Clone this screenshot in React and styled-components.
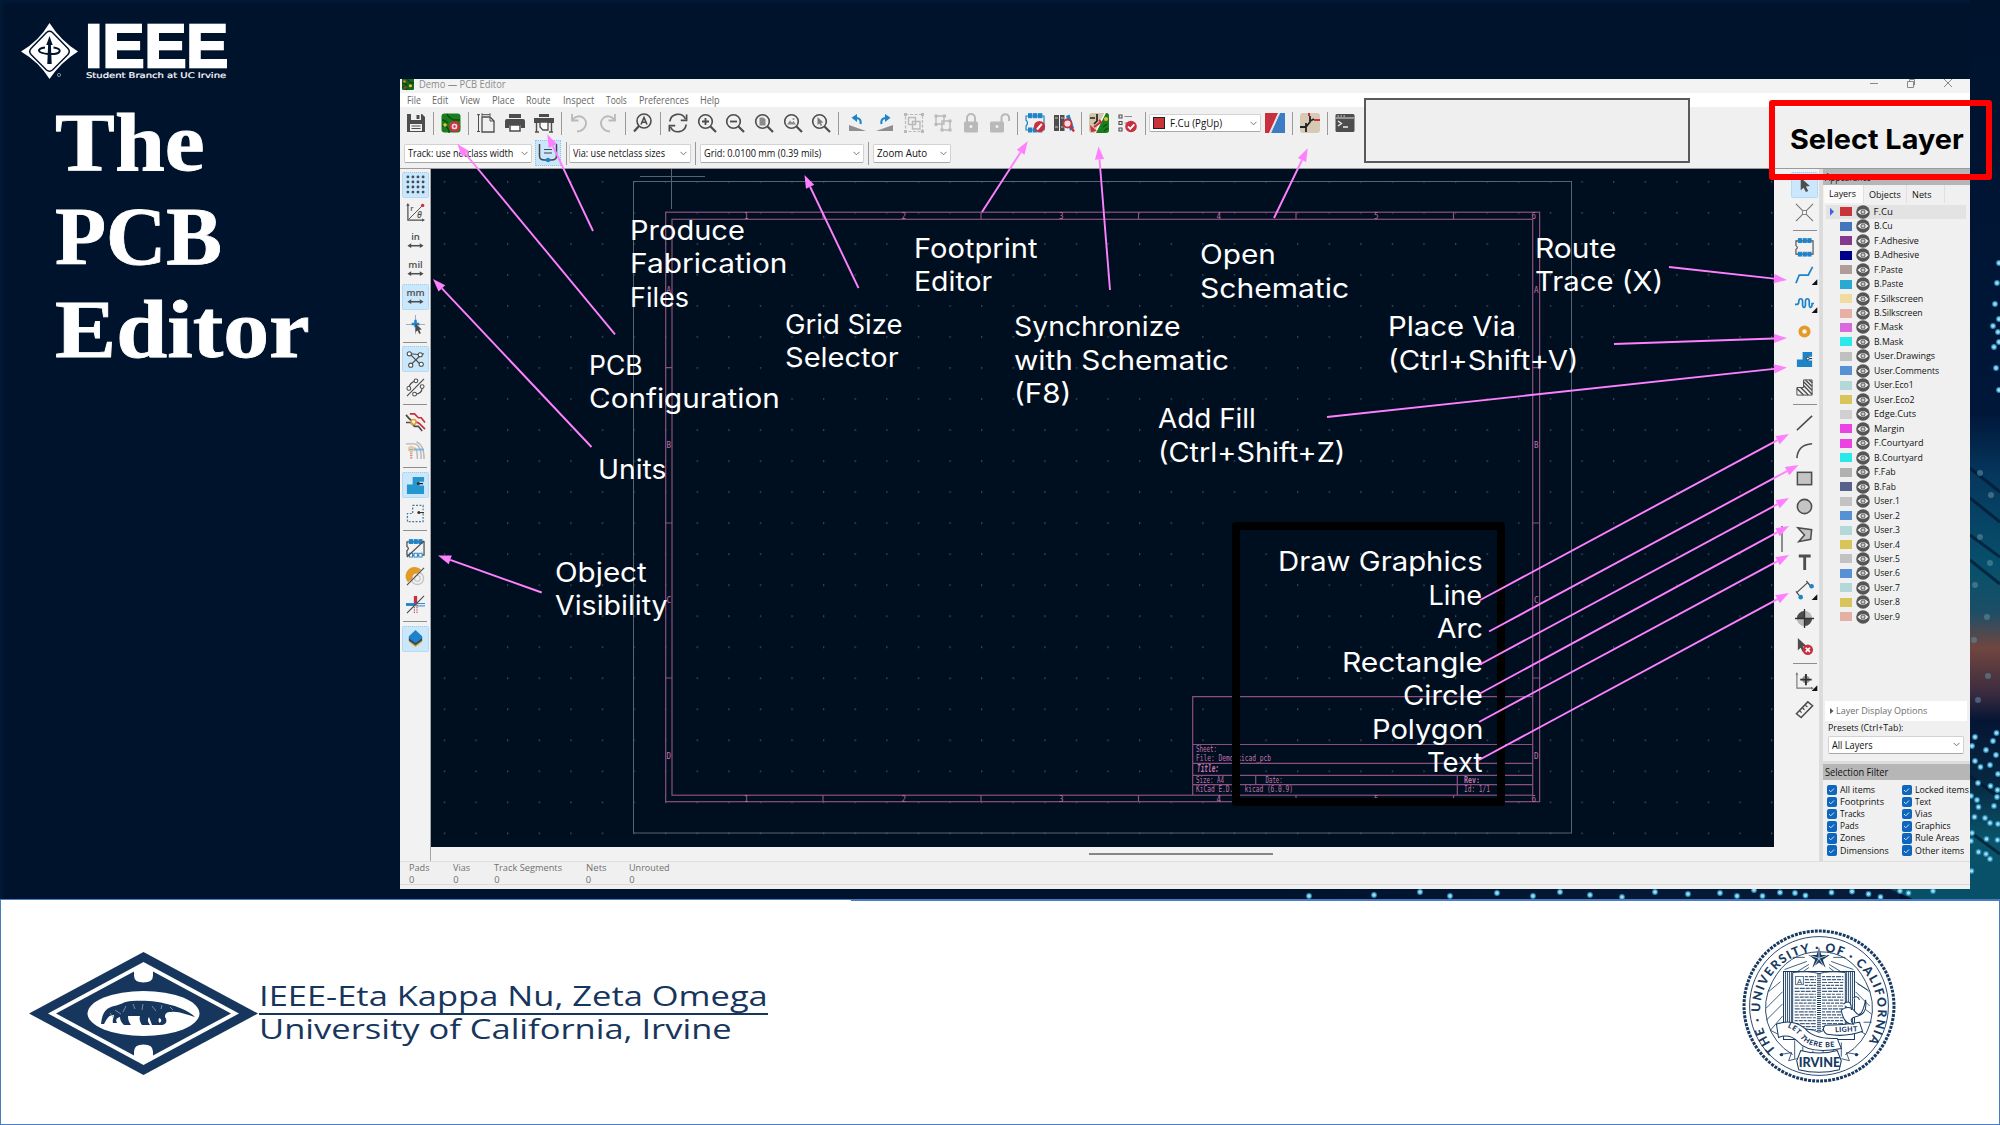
import React, { useLayoutEffect, useRef, useState } from "react";
import styled, { createGlobalStyle } from "styled-components";

const Global = createGlobalStyle`
  * { box-sizing: border-box; }
  html, body { margin: 0; padding: 0; background: #00132d; }
  svg { display: block; }
`;

/* ---------- text that is stretched to a given width ---------- */
const FitBox = styled.span`
  display: block;
  flex: none;
  width: ${(p) => p.$w}px;
  white-space: nowrap;
`;
const FitInner = styled.span`
  display: inline-block;
  white-space: nowrap;
  transform-origin: 0 50%;
`;
function Fit({ w, children }) {
  const ref = useRef(null);
  const [scale, setScale] = useState(1);
  useLayoutEffect(() => {
    const natural = ref.current.offsetWidth;
    if (natural) setScale(w / natural);
  }, [w, children]);
  return (
    <FitBox $w={w}>
      <FitInner ref={ref} style={{ transform: `scaleX(${scale})` }}>{children}</FitInner>
    </FitBox>
  );
}

/* ---------- slide ---------- */
const Slide = styled.main`
  position: relative;
  width: 2000px;
  height: 1125px;
  overflow: hidden;
  display: grid;
  grid-template-rows: 899px 226px;
  background: #00132d;
  font-family: "Open Sans", "Noto Sans", sans-serif;
`;
const Stage = styled.section`
  position: relative;
  display: flex;
  overflow: hidden;
  background: #00132d;
  box-shadow: inset 2px 2px 5px #021d39;
`;
const Backdrop = styled.svg`
  position: absolute;
  right: 0;
  top: 0;
`;
const Side = styled.aside`
  width: 400px;
  flex: none;
  display: flex;
  flex-direction: column;
  color: #fff;
`;
const Brand = styled.div`
  display: flex;
  gap: 7px;
  padding: 23px 0 0 21px;
  height: 92px;
`;
const BrandText = styled.div`
  display: flex;
  flex-direction: column;
`;
const BrandName = styled.div`
  font: 700 62px/46px "Liberation Sans", Arial, sans-serif;
  -webkit-text-stroke: 2.4px #fff;
  height: 48px;
`;
const BrandSub = styled.div`
  padding-left: 1px;
  font: 400 7.8px/10px "DejaVu Sans", sans-serif;
  -webkit-text-stroke: 0.2px #fff;
`;
const Title = styled.h1`
  margin: 4px 0 0 55px;
  font: 700 82px/93.5px "Liberation Serif", Georgia, serif;
  -webkit-text-stroke: 0.8px #fff;
`;

/* ---------- editor window ---------- */
const Window = styled.div`
  position: relative;
  margin-top: 79px;
  width: 1570px;
  height: 810px;
  display: flex;
  flex-direction: column;
  background: #f0f0f0;
  color: #111;
  font-size: 10px;
  overflow: hidden;
`;
const TitleBar = styled.div`
  height: 14px;
  flex: none;
  display: flex;
  align-items: center;
  gap: 5px;
  padding: 0 17px 4px 2px;
  background: #f3f3f3;
  color: #8b8b8b;
  line-height: 10px;
`;
const WindowButtons = styled.div`
  margin-left: auto;
  display: flex;
  gap: 27px;
`;
const MenuBar = styled.nav`
  height: 14px;
  flex: none;
  display: flex;
  align-items: center;
  gap: 11.6px;
  padding-left: 6.5px;
  background: #fff;
  color: #666;
  line-height: 14px;
`;
const ToolRow = styled.div`
  height: 32px;
  flex: none;
  display: flex;
  align-items: center;
  padding-left: 1.6px;
`;
const OptionRow = styled.div`
  height: 30px;
  flex: none;
  display: flex;
  align-items: center;
  padding: 0 0 1px 4px;
  border-bottom: 1px solid #9b9b9b;
`;
const Slot = styled.div`
  width: 28.7px;
  height: 24px;
  flex: none;
  display: grid;
  place-items: center;
`;
const Sep = styled.i`
  width: 1px;
  height: 23px;
  margin: 0 ${(p) => p.$m ?? 2.75}px;
  flex: none;
  background: #9a9a9a;
`;
const Select = styled.div`
  width: ${(p) => p.$w}px;
  height: ${(p) => p.$h ?? 19}px;
  flex: none;
  display: flex;
  align-items: center;
  gap: 5px;
  padding: 0 3px;
  background: #fff;
  border: 1px solid #d2d2d2;
  border-bottom-color: #a8a8a8;
  border-radius: 2px;
  color: #111;
  font-size: 10.3px;
  line-height: 14px;
  & > svg { margin-left: auto; }
`;
const LayerChip = styled.i`
  width: 12px;
  height: 12px;
  background: #c83438;
  border: 1px solid #222;
`;
const TrackButton = styled.div`
  width: 26px;
  height: 26px;
  margin: 0 3.5px 0 2.5px;
  display: grid;
  place-items: center;
  background: #c9e6fb;
  border: 1px dotted #8fc6ee;
`;

const Body = styled.div`
  height: 692px;
  flex: none;
  display: flex;
`;
const ToolColumn = styled.div`
  width: ${(p) => p.$w}px;
  flex: none;
  display: flex;
  flex-direction: column;
  align-items: center;
  padding: 1.5px 0 0 ${(p) => p.$pl ?? 0}px;
  background: #f2f2f2;
`;
const ToolCell = styled.div`
  width: 27px;
  height: 26px;
  margin: 1px 0;
  flex: none;
  display: grid;
  place-items: center;
  border-radius: 2px;
  background: ${(p) => (p.$on ? "#cae7fb" : "transparent")};
  border: 1px dotted ${(p) => (p.$on ? "#9ccdf0" : "transparent")};
`;
const HSep = styled.i`
  width: 24px;
  height: 1px;
  margin: 3px 0 2.9px;
  flex: none;
  background: #8e8e8e;
`;
const CanvasColumn = styled.div`
  width: 1358px;
  flex: none;
  display: grid;
  grid-template: 678px 14px / 1343px 15px;
  border-left: 1px solid #a5a5a5;
  border-right: 1px solid #b0b0b0;
  border-bottom: 1px solid #b4b4b4;
`;
const VScroll = styled.div`
  grid-row: 1 / 3;
  grid-column: 2;
  background: #f2f2f2;
  padding: 357px 0 0 7px;
  & > i { display: block; width: 2px; height: 26px; background: #8c8c8c; }
`;
const HScroll = styled.div`
  background: #f2f2f2;
  padding: 6px 0 0 658px;
  & > i { display: block; width: 184px; height: 2px; background: #858585; }
`;
const Panel = styled.div`
  width: 151px;
  flex: none;
  display: flex;
  flex-direction: column;
  border-left: 4px solid #dcdcdc;
  background: #f0f0f0;
  line-height: 12px;
`;
const PanelHead = styled.div`
  height: 16px;
  flex: none;
  padding-left: 2px;
  background: #b6b6b6;
  color: #111;
  font-size: 10px;
  line-height: 16px;
`;
const Tabs = styled.div`
  display: flex;
  height: 20px;
  padding-left: 1px;
  flex: none;
  font-size: 9.6px;
`;
const Tab = styled.div`
  height: 18px;
  padding: 0 ${(p) => p.$pr ?? 5}px 0 5px;
  border-right: 1px solid #e0e0e0;
  background: ${(p) => (p.$on ? "#fafafa" : "transparent")};
  line-height: ${(p) => (p.$on ? 17 : 20)}px;
`;
const Layers = styled.div`
  height: 496px;
  flex: none;
  padding-left: 3px;
  margin-top: -0.5px;
`;
const LayerRow = styled.div`
  width: 140px;
  height: 14.48px;
  display: flex;
  align-items: center;
  padding-left: 4px;
  background: ${(p) => (p.$on ? "#e3e3e3" : "transparent")};
  font-size: 9.6px;
`;
const Marker = styled.i`
  width: 4px;
  height: 8px;
  margin-right: 6px;
  background: ${(p) => (p.$on ? "#4060e0" : "transparent")};
  clip-path: polygon(0 0, 100% 50%, 0 100%);
`;
const Swatch = styled.i`
  width: 12px;
  height: 9px;
  margin-right: 3.5px;
  background: ${(p) => p.$c};
`;
const Eye = styled.svg`
  margin-right: 4px;
`;
const DisplayOptions = styled.div`
  height: 20px;
  flex: none;
  display: flex;
  align-items: center;
  gap: 1.5px;
  margin: 0 3px 0 2px;
  padding-left: 5px;
  background: #fff;
  color: #6e6e6e;
  font-size: 9.8px;
`;
const Presets = styled.div`
  height: 43px;
  flex: none;
  display: flex;
  flex-direction: column;
  gap: 1.5px;
  padding: 1.5px 0 0 5px;
  border-bottom: 3px solid #dcdcdc;
  font-size: 9.6px;
`;
const FilterGrid = styled.div`
  display: grid;
  grid-template-columns: 75px 72px;
  grid-auto-rows: 12.1px;
  padding: 4.5px 0 0 3.5px;
  font-size: 9.6px;
`;
const Check = styled.div`
  display: flex;
  align-items: center;
  gap: 2.5px;
  white-space: nowrap;
`;
const CheckBox = styled.span`
  width: 10.5px;
  height: 10.5px;
  flex: none;
  display: grid;
  place-items: center;
  border-radius: 2px;
  background: #0f66bd;
`;
const StatusBar = styled.div`
  height: 28px;
  flex: none;
  display: flex;
  padding-left: 9px;
  color: #707070;
  border-top: 1px solid #dedede;
  box-shadow: inset 0 -4px #f0f0f0, inset 0 -5px #dadada;
  font-size: 9.4px;
  line-height: 11.5px;
`;
const Status = styled.div`
  width: ${(p) => p.$slot}px;
  flex: none;
`;

/* ---------- annotations over the window ---------- */
const Overlay = styled.div`
  position: absolute;
  inset: 0;
  pointer-events: none;
`;
const Label = styled.div`
  position: absolute;
  left: ${(p) => p.$x}px;
  top: ${(p) => p.$y - 25.6}px;
  display: flex;
  flex-direction: column;
  align-items: ${(p) => (p.$right ? "flex-end" : "flex-start")};
  width: ${(p) => (p.$right ? 230 : 240)}px;
  color: #fff;
  font: 400 27px/33.5px Inter, "Open Sans", sans-serif;
`;
const Frame = styled.div`
  position: absolute;
  left: ${(p) => p.$x}px;
  top: ${(p) => p.$y}px;
  width: ${(p) => p.$w}px;
  height: ${(p) => p.$h}px;
  border: ${(p) => p.$b}px solid ${(p) => p.$c};
  border-radius: ${(p) => p.$r ?? 0}px;
  background: ${(p) => p.$bg ?? "transparent"};
`;
const SelectLayer = styled(Frame)`
  padding: 13px 0 0 15px;
  color: #000;
  font: 700 27.5px/40px Inter, "Open Sans", sans-serif;
`;
const Arrows = styled.svg`
  position: absolute;
  inset: 0;
`;

/* ---------- footer ---------- */
const Footer = styled.footer`
  position: relative;
  display: flex;
  align-items: flex-start;
  justify-content: space-between;
  background: #fff;
  border: 1px solid #4a7cc0;
  padding: 0 103px 0 28px;
`;
const FooterRule = styled.i`
  position: absolute;
  right: 0;
  top: -1px;
  width: 1148px;
  height: 2px;
  background: #4a7cc0;
`;
const Chapter = styled.div`
  display: flex;
  padding-top: 52px;
  gap: 1px;
`;
const ChapterText = styled.div`
  padding-top: 27px;
  color: #17365d;
  font: 400 27.5px/34px "Open Sans", "Noto Sans", sans-serif;
`;
const ChapterLine = styled.div`
  height: 36px;
  border-bottom: ${(p) => (p.$rule ? "2px solid #17365d" : "0")};
  line-height: ${(p) => (p.$rule ? 34 : 27)}px;
`;
const SealBox = styled.div`
  padding-top: 29px;
`;

/* ---------- icons, all on a 20 unit grid ---------- */
const D = "#4d4d4d";
const B = "#1e83c9";
const R = "#c9303f";
const G = "#b9b9b9";
const s = (stroke = D, w = 1.6) => ({ fill: "none", stroke, strokeWidth: w });

const lens = (
  <>
    <circle cx="8.5" cy="8.5" r="6.8" {...s()} />
    <path d="M13.5 13.5 19 19" {...s(D, 2.2)} />
  </>
);
const padRow = (y, fill = B) => (
  <g fill={fill} stroke={B}>
    <rect x="3.5" y={y} width="3.4" height="4" />
    <rect x="8.5" y={y} width="3.4" height="4" />
    <rect x="13.5" y={y} width="3.4" height="4" />
  </g>
);
const unit = (name) => (
  <>
    <text x="10" y="9.6" textAnchor="middle" fontFamily="Open Sans, sans-serif" fontWeight="600" fontSize="10" fill={D}>{name}</text>
    <path d="M3 15.5h14" {...s()} />
    <path d="M1.5 15.5l4-2.5v5zM18.5 15.5l-4-2.5v5z" fill={D} />
  </>
);
const more = <path d="M20 19v-6l-6 6z" fill="#111" transform="translate(3.5 1)" />;

const icons = {
  save: (
    <>
      <path d="M1 1h15l3 3v15H1z" fill={D} />
      <path d="M5 1h10v6H5zM4 11h12v7H4z" fill="#f0f0f0" />
      <path d="M10.5 2h3v4h-3z" fill={D} />
      <path d="M5.5 13h9M5.5 15.5h9" {...s(D, 1)} />
    </>
  ),
  board: (
    <>
      <rect x=".5" y=".5" width="19" height="19" rx="3" fill="#1a7d1e" />
      <path d="M1 7c4 0 4 2 6 3M6 1c1 4 5 4 6 6h7M1 13h4l3 4v3" {...s("#0c4d10", 1.3)} />
      <circle cx="4" cy="12" r="1.8" fill="#e0c33c" />
      <circle cx="13.5" cy="13.5" r="4.5" fill="#f1d9db" stroke={R} strokeWidth="2.6" strokeDasharray="2.4 1" />
      <circle cx="13.5" cy="13.5" r="3.8" {...s(R, 1.6)} />
      <circle cx="13.5" cy="13.5" r="1.2" fill={R} />
    </>
  ),
  app: (
    <>
      <rect width="20" height="20" rx="2" fill="#17661b" />
      <path d="M0 8c6 0 6 3 9 4M8 0c1 5 5 5 6 8h6M0 15h5l3 5" {...s("#0a3d0d", 2)} />
      <circle cx="4" cy="6" r="2.2" fill="#d9832c" />
      <circle cx="14" cy="13" r="2.6" fill="#e0c33c" />
      <circle cx="5" cy="16" r="2" fill="#c9303f" />
    </>
  ),
  page: (
    <>
      <path d="M6 4h8l4 4v11H6z" {...s(D, 1.3)} />
      <path d="M14 4v4h4M2.5 1v18M1 1.7h3M1 18.5h3M6 1.7h8M6 .3v2.6M14 .3v2.6" {...s(D, 1)} />
    </>
  ),
  print: (
    <>
      <path d="M4 1h12v4H4z" fill={D} />
      <path d="M0 8q0-2 2-2h16q2 0 2 2v7h-4v-3H4v3H0z" fill={D} />
      <path d="M5 12h10v6H5z" fill="#fff" stroke={D} strokeWidth="1.5" />
    </>
  ),
  plot: (
    <>
      <path d="M5 1h10v3H5zM0 5h20v5H0z" fill={D} />
      <path d="M6 9h8v8h-5l-3-3z" fill="#fff" stroke={D} strokeWidth="1.3" />
      <path d="M2.5 10v9M17.5 10v9M1 19h4M15 19h4" {...s(D, 1.4)} />
    </>
  ),
  undo: <path d="M3 1v6.5h6.5M3.4 7C6 3 12 1.5 15.5 6S16 18 8 18.5" {...s(G, 1.8)} />,
  redo: <path d="M17 1v6.5h-6.5M16.6 7C14 3 8 1.5 4.5 6S4 18 12 18.5" {...s(G, 1.8)} />,
  find: (
    <>
      <circle cx="11" cy="8" r="7" {...s()} />
      <path d="M6 13l-5 5.5" {...s(D, 2.2)} />
      <path d="M8 11.5l3-7 3 7M9 9.3h4" {...s(D, 1.6)} />
    </>
  ),
  refresh: (
    <>
      <path d="M1.8 8.5A8.3 8.3 0 0 1 17.5 6M18.2 11.5A8.3 8.3 0 0 1 2.5 14" {...s(D, 1.7)} />
      <path d="M18.6 1.5v5.8h-5.8M1.4 18.5v-5.8h5.8" {...s(D, 1.7)} />
    </>
  ),
  zin: <>{lens}<path d="M5 8.5h7M8.5 5v7" {...s(D, 1.8)} /></>,
  zout: <>{lens}<path d="M5 8.5h7" {...s(D, 1.8)} /></>,
  zfit: <>{lens}<path d="M5.5 4.5h4l2 2v6h-6z" fill="#8b8b8b" /></>,
  zobj: <>{lens}<path d="M4 11.5l3-4 2 2 1.5-1.5 2.5 3.5z" fill="#8b8b8b" /><circle cx="10.5" cy="6" r="1" fill="#8b8b8b" /></>,
  zsel: <>{lens}<path d="M6.5 4v8l2-1.6 1.2 2.6 1.4-.8L10 9.7l2.4-.3z" fill="#7b7b7b" /></>,
  ccw: (
    <>
      <path d="M2 12v6h17z" fill="#8e8e8e" />
      <path d="M13.5 11c1-5-2-6.5-6.5-6" {...s(B, 2)} />
      <path d="M10 1L4.5 4.8 10 9z" fill={B} />
    </>
  ),
  cw: (
    <>
      <path d="M18 12v6H1z" fill="#8e8e8e" />
      <path d="M6.5 11c-1-5 2-6.5 6.5-6" {...s(B, 2)} />
      <path d="M10 1l5.5 3.8L10 9z" fill={B} />
    </>
  ),
  group: (
    <>
      <path d="M1.5 1.5h17v17h-17z" {...s(G, 1.2)} strokeDasharray="3 1.5" />
      <path d="M4.5 4.5h7v7h-7zM8.5 8.5h7.5v7.5H8.5z" fill="#f0f0f0" stroke={G} strokeWidth="1.4" />
      <path d="M0 0h3v3H0zM17 0h3v3h-3zM0 17h3v3H0zM17 17h3v3h-3z" fill={G} />
    </>
  ),
  ungroup: (
    <>
      <path d="M3 3h8v8H3zM9 8h8v9H9z" fill="#f0f0f0" stroke={G} strokeWidth="1.4" />
      <path d="M1.5 1.5h3v3h-3zM10 1.5h3v3h-3zM1.5 10h3v3h-3zM7.5 15.5h3v3h-3zM15.5 15.5h3v3h-3zM15.5 6.5h3v3h-3z" fill={G} />
    </>
  ),
  lock: (
    <>
      <rect x="3" y="8.5" width="14" height="11" rx="1.5" fill={G} />
      <path d="M6 9V5a4 4 0 0 1 8 0v4" {...s(G, 2)} />
      <circle cx="10" cy="13.5" r="1.5" fill="#f0f0f0" />
    </>
  ),
  unlock: (
    <>
      <rect x="0" y="8.5" width="14" height="11" rx="1.5" fill={G} />
      <path d="M11.5 9V5a3.800 3.800 0 0 1 7.6 0v3" {...s(G, 2)} />
      <circle cx="7" cy="13.5" r="1.5" fill="#f0f0f0" />
    </>
  ),
  footprint: (
    <>
      <path d="M1 3v4q3 3 0 6v4h18V3z" {...s(B, 1.2)} />
      {padRow(0.7)}{padRow(15)}
      <circle cx="14.5" cy="13.5" r="5.6" fill={R} />
      <path d="M12 16.500l4.800-5.500" {...s("#fff", 2)} />
    </>
  ),
  library: (
    <>
      <path d="M0 2h5v16H0zM6 2h4.500v16H6z" fill={D} />
      <path d="M1 5h3M7 5h2.500M1 14h3M7 14h2.500" {...s("#ccc", 1)} />
      <path d="M12 3l3.500-1.500L20 15l-4 3z" fill={B} />
      <circle cx="13.5" cy="10.5" r="4" fill="#f0dfe2" stroke={R} strokeWidth="1.8" />
      <path d="M16.500 13.500l3.500 5" {...s(R, 2.2)} />
    </>
  ),
  sync: (
    <>
      <rect width="20" height="20" rx="3" fill="#d3c5a9" />
      <path d="M17 0L7 20h10q3 0 3-3V3q0-3-3-3z" fill="#1a7d1e" />
      <path d="M16 0L6 20" {...s("#fff", 1.2)} />
      <path d="M1 5h5M8 1v7l-3 3" {...s("#222", 1.7)} />
      <circle cx="17" cy="6" r="2" fill="#e0c33c" />
      <path d="M10 7l2 2-7 5" {...s(R, 2)} />
      <path d="M1 12l1 7 6-1z" fill={R} />
      <path d="M14 14l4-3M15 18l4-3" {...s("#0c4d10", 1.2)} />
    </>
  ),
  drc: (
    <>
      <path d="M1 2h3v3H1zM1 8.500h3v3H1zM1 15h3v3H1z" {...s(D, 1.1)} />
      <path d="M6.500 3.500H14M6.500 10H9" {...s("#888", 1.2)} />
      <circle cx="13" cy="13.5" r="5.8" fill={R} />
      <path d="M10 13.500l2.300 2.400 4-4.500" {...s("#fff", 1.8)} />
    </>
  ),
  pair: (
    <>
      <path d="M0 0h13L4 20H0z" fill={R} />
      <path d="M15 0h5v20H6z" fill="#3b7cc4" />
      <path d="M14.500 0l-9 20" {...s("#ddd", 1)} />
    </>
  ),
  schematic: (
    <>
      <rect width="20" height="20" rx="3" fill="#d6cab4" />
      <path d="M10 3v6l-4 5M0 14h6v-4M6 14v5M10 8l4-2" {...s("#222", 1.8)} />
      <path d="M9 0v3M14 7h6" {...s(R, 2)} />
    </>
  ),
  console: (
    <>
      <rect x=".5" y="1" width="19" height="18" rx="1.5" fill={D} />
      <path d="M1 5h18" {...s("#ddd", 1)} />
      <path d="M2.500 3h1.500M5.500 3h1.500M8.500 3h1.500" {...s("#ddd", 1)} />
      <path d="M3 8l3.500 2.500L3 13M8 14h5" {...s("#eee", 1.3)} />
    </>
  ),
  grid: (
    <g fill="#3f4e5a">
      {[2, 7.3, 12.6, 18].map((y) => [2, 7.3, 12.6, 18].map((x) => <circle key={`${x}-${y}`} cx={x} cy={y} r="1.5" />))}
    </g>
  ),
  polar: (
    <>
      <path d="M2 2v16h16" {...s(D, 1.3)} />
      <path d="M2 0l1.800 3H.2zM20 18l-3-1.800v3.600z" fill={D} />
      <path d="M3 17L17 3" {...s(D, 1)} />
      <circle cx="17.5" cy="2.5" r="1.8" fill={R} />
      <text x="4.5" y="8.5" fontFamily="Open Sans, sans-serif" fontSize="8" fontWeight="600" fill={D}>r</text>
      <text x="11.5" y="15.5" fontFamily="Open Sans, sans-serif" fontStyle="italic" fontWeight="600" fontSize="9" fill={D}>θ</text>
    </>
  ),
  inch: unit("in"),
  mil: unit("mil"),
  mm: unit("mm"),
  cross: (
    <>
      <path d="M10 0v20M0 10h20" {...s("#9ab", 1)} />
      <path d="M10 5v8M6 9.500h8" {...s(B, 2.6)} />
      <path d="M10 9v9l2.200-1.800L14 20l1.600-.8-1.600-3.600 2.700-.4z" fill={D} />
    </>
  ),
  ratsnest: (
    <>
      <path d="M4 4l11 11M3.500 17L16 5M5 4l10 1 4-1" {...s(D, 1.2)} />
      {[[3.5, 4], [15, 5], [5, 16], [16, 15]].map(([x, y]) => <circle key={x} cx={x} cy={y} r="2.2" fill="#fff" stroke={D} strokeWidth="1.1" />)}
    </>
  ),
  curved: (
    <>
      <path d="M1 19L19 1M3 10q1-5 7-7M9 17q8 0 8-7" {...s(D, 1.2)} />
      {[[3, 11], [10.5, 3], [9, 17], [17, 9]].map(([x, y]) => <circle key={x} cx={x} cy={y} r="2" fill="#fff" stroke={D} strokeWidth="1.1" />)}
    </>
  ),
  netcolor: (
    <>
      <path d="M0 2q4 5 6 6M0 10h5l4 4h4l4 5" {...s(D, 1.8)} />
      <path d="M4 1h5l4 4h3l4 5M10 9l4 2 6 6" {...s(R, 1.8)} />
      <circle cx="8" cy="9.5" r="2.6" {...s("#e5a02c", 1.6)} />
    </>
  ),
  contrast: (
    <g opacity=".55">
      <path d="M0 3h9q7 1 7 16M9 7q3 2 3 12M11 1q8 3 8 18" {...s("#888", 1.5)} />
      <path d="M3 9h16" {...s(B, 2)} />
      <path d="M5.500 12v7" {...s(R, 2.6)} strokeDasharray="1.5 1" />
      <circle cx="5.5" cy="8.5" r="2.5" {...s("#e5a02c", 1.5)} />
    </g>
  ),
  zone: (
    <>
      <path d="M7 1h12v5h-5v4h5v9H1V9h6z" fill="#2596d0" />
      <path d="M12 8h6" {...s("#222", 1.4)} />
      <circle cx="13" cy="8" r="1.6" fill="#333" />
    </>
  ),
  zoneOutline: (
    <>
      <path d="M7 1.500h11v5M18 10v8.500H1.500V10H7V1.500" {...s("#44789c", 1.3)} strokeDasharray="2 1.6" />
      <circle cx="13.5" cy="9" r="1.6" fill="#333" />
      <path d="M13 9h6" {...s("#333", 1.2)} />
    </>
  ),
  fpOutline: (
    <>
      <path d="M1 3v5q3 2 0 4v5h18V3z" {...s(D, 1.3)} />
      {padRow(0.7)}{padRow(15, "#fff")}
      <path d="M1 19L19 2" {...s(D, 1.3)} />
    </>
  ),
  viaOutline: (
    <>
      <circle cx="12" cy="12" r="6.5" {...s("#c4c4c4", 1.5)} />
      <path d="M2 16A8 8 0 0 1 16 3L11.500 7A4 4 0 0 0 7 12z" fill="#e39a27" />
      <circle cx="12" cy="12" r="3" {...s("#c4c4c4", 1.2)} />
      <path d="M1 19L19 1" {...s(D, 1.2)} />
    </>
  ),
  trackOutline: (
    <>
      <path d="M10 1v9" {...s(R, 3.5)} />
      <path d="M8.800 10v9M11.600 10v9" {...s(R, 1)} strokeDasharray="1.5 1" />
      <path d="M0 10h10" {...s(B, 3)} />
      <path d="M10 9h10M10 11.500h10" {...s(B, 1)} />
      <path d="M1 19L19 1" {...s(D, 1.2)} />
    </>
  ),
  stack: (
    <>
      <path d="M10 5l7 5.500v3L10 19l-7-5.500v-3z" fill="#e5a02c" />
      <path d="M10 3l7 6v3l-7 5-7-5V9z" fill="#274a63" />
      <path d="M10 1l7 6.500v2L10 15 3 9.500v-2z" fill={B} />
    </>
  ),
  cursor: <path d="M6 3v13l3-2.600L11.500 18l2.400-1.200-2.400-4.800 4.200-.4z" fill={D} />,
  highlight: (
    <>
      <path d="M1 1l18 18M19 1L1 19" {...s("#777", 1.2)} />
      <rect x="8" y="8" width="4" height="4" fill="#fff" stroke="#777" />
    </>
  ),
  addFp: (
    <>
      <path d="M1 3v5q3 2 0 4v5h18V3z" {...s(D, 1.2)} />
      {padRow(0.7)}{padRow(15)}
    </>
  ),
  route: <><path d="M1 18l3.500-8.500H14L18.500 1" {...s(B, 1.8)} />{more}</>,
  tune: <><path d="M0 11h2q2 0 2-3t2-3 2 3v3q0 3 1.500 3t1.500-3V8q0-3 2-3t2 3v3q0 3 1.500 3T18 10h2" {...s(B, 1.8)} />{more}</>,
  via: <circle cx="10" cy="10" r="4.4" {...s("#e39a27", 4)} />,
  addZone: (
    <>
      <path d="M8 2h10v5h-4v4h4v7H2v-8h6z" fill={B} />
      <path d="M13 9h5" {...s("#333", 1.2)} />
      <circle cx="13.5" cy="9" r="1.5" fill="#fff" stroke="#333" />
    </>
  ),
  keepout: (
    <>
      <path d="M9 2h9v16H2v-8h7z" {...s(D, 1)} />
      <path d="M2 11l7 7M6 10l8 8M9 8l9 9M9 4l9 9M11 2l7 7M15 2l3 3" {...s(D, 1.5)} />
    </>
  ),
  line: <path d="M2 18L18 3" {...s()} />,
  arc: <path d="M2 18Q3 4 18 3" {...s()} />,
  rect: <rect x="2.5" y="3.5" width="15" height="13" fill="#c4c4c4" stroke={D} strokeWidth="1.6" />,
  circle: <circle cx="10" cy="10" r="7.5" fill="#c4c4c4" stroke={D} strokeWidth="1.6" />,
  poly: <path d="M3 3l14.500 2-1 10L4 17.500l6-7z" fill="#c4c4c4" stroke={D} strokeWidth="1.6" />,
  text: <path d="M4 3.200h12.500M10.200 3v15" {...s(D, 3)} />,
  dim: (
    <>
      <path d="M2 12L13 2M12 0l4 5M1 11l4 5" {...s(D, 1.3)} />
      <circle cx="17.5" cy="5.5" r="2.4" fill={B} />
      <circle cx="6" cy="17" r="2.4" fill={B} />
      {more}
    </>
  ),
  target: (
    <>
      <circle cx="10" cy="10" r="8" fill="#c4c4c4" />
      <path d="M10 10V2A8 8 0 0 1 18 10zM10 10v8A8 8 0 0 1 2 10z" fill="#b8b8b8" />
      <path d="M10 10V2A8 8 0 0 0 2 10zM10 10v8A8 8 0 0 0 18 10z" fill={D} />
      <path d="M10 0v20M0 10h20" {...s("#333", 1.4)} />
    </>
  ),
  del: (
    <>
      <path d="M3 1v13l3-2.600 2 4 2-1-2-4.400 4-.4z" fill={D} />
      <circle cx="13.5" cy="13.5" r="5.5" fill={R} />
      <path d="M11.300 11.300l4.400 4.400M15.700 11.300l-4.400 4.400" {...s("#fff", 1.8)} />
    </>
  ),
  gridOrigin: (
    <>
      <path d="M2 2v15h16" {...s("#777", 1.2)} />
      <path d="M2 0l1.500 3h-3zM20 17l-3-1.500v3z" fill="#777" />
      <circle cx="11.5" cy="8" r="4" fill="#999" />
      <path d="M11.500 2v12M5.500 8h12" {...s("#333", 2)} />
      {more}
    </>
  ),
  ruler: (
    <>
      <path d="M1.500 14.500l12-12.500 5 4L6.500 18.500z" {...s()} />
      <path d="M5 11.500l2 1.800M8 8.500l2 1.800M11 5.500l2 1.800" {...s(D, 1.3)} />
    </>
  ),
};
const Icon = ({ name, size = 20 }) => (
  <svg width={size} height={size} viewBox="0 0 20 20" overflow="visible">{icons[name]}</svg>
);
const Chevron = () => (
  <svg width="7" height="5" viewBox="0 0 7 5"><path d="M.5 .8l3 3 3-3" fill="none" stroke="#777" /></svg>
);

/* ---------- data ---------- */
const menus = [["File", 14], ["Edit", 16.5], ["View", 20], ["Place", 23], ["Route", 25], ["Inspect", 31.5], ["Tools", 21], ["Preferences", 50], ["Help", 20]];
const topTools = "save | board | page print plot | undo redo | find | refresh zin zout zfit zobj zsel | ccw cw group ungroup lock unlock | footprint library | sync drc |".split(" ");
const leftTools = "grid* polar inch mil mm* cross | ratsnest* curved | netcolor contrast | zone* zoneOutline | fpOutline viaOutline trackOutline | stack*".split(" ");
const rightTools = "cursor* highlight | addFp route tune via addZone keepout | line arc rect circle poly text dim target del | gridOrigin ruler".split(" ");
const layers = [
  ["F.Cu", "#c83438", 19], ["B.Cu", "#4476bd", 19], ["F.Adhesive", "#843a8c", 45], ["B.Adhesive", "#00008a", 45],
  ["F.Paste", "#b09c98", 29], ["B.Paste", "#2aaad0", 29], ["F.Silkscreen", "#f0dca0", 49], ["B.Silkscreen", "#e8b0a4", 49],
  ["F.Mask", "#d86ae0", 29], ["B.Mask", "#2be8ea", 29], ["User.Drawings", "#c0c0c0", 61], ["User.Comments", "#5790d4", 65],
  ["User.Eco1", "#b4d8d8", 40], ["User.Eco2", "#d8c458", 41], ["Edge.Cuts", "#d0d0d0", 42], ["Margin", "#ea44e2", 30],
  ["F.Courtyard", "#ea44e2", 49], ["B.Courtyard", "#2be8ea", 49], ["F.Fab", "#b0b0b0", 22], ["B.Fab", "#58608c", 22],
  ["User.1", "#c2c2c2", 26], ["User.2", "#5790d4", 26], ["User.3", "#b4d8d8", 26], ["User.4", "#d8c458", 26],
  ["User.5", "#c2c2c2", 26], ["User.6", "#5790d4", 26], ["User.7", "#b4d8d8", 26], ["User.8", "#d8c458", 26], ["User.9", "#e2b0a4", 26],
];
const filters = [
  ["All items", 35], ["Locked items", 54], ["Footprints", 44], ["Text", 16], ["Tracks", 25], ["Vias", 17],
  ["Pads", 19], ["Graphics", 36], ["Zones", 25], ["Rule Areas", 44], ["Dimensions", 49], ["Other items", 49],
];
const statuses = [["Pads", 20.5, 44.2], ["Vias", 17.5, 41], ["Track Segments", 68, 91.5], ["Nets", 20.5, 43.5], ["Unrouted", 40.5, 80]];
const labels = [
  [630, 239.3, [["Produce", 115], ["Fabrication", 157], ["Files", 59]]],
  [589, 374.5, [["PCB", 54], ["Configuration", 191]]],
  [598, 479, [["Units", 68]]],
  [555, 581.3, [["Object", 92], ["Visibility", 113]]],
  [785, 333.3, [["Grid Size", 118], ["Selector", 114]]],
  [913.5, 257.5, [["Footprint", 124], ["Editor", 78]]],
  [1014, 336, [["Synchronize", 167], ["with Schematic", 215], ["(F8)", 57]]],
  [1200, 264, [["Open", 76], ["Schematic", 149]]],
  [1158, 428, [["Add Fill", 98], ["(Ctrl+Shift+Z)", 187]]],
  [1388, 336, [["Place Via", 128], ["(Ctrl+Shift+V)", 191]]],
  [1534.5, 257.5, [["Route", 81], ["Trace (X)", 128]]],
];
const drawLabels = [["Draw Graphics", 205], ["Line", 54], ["Arc", 46], ["Rectangle", 141], ["Circle", 80], ["Polygon", 111], ["Text", 56]];
const arrows = [
  [615, 334.3, 457.3, 144], [593, 231, 547.3, 134.3], [858.5, 288, 804.5, 175], [982, 212, 1027.7, 141.3],
  [1110, 290, 1098.5, 146.5], [1274, 218, 1307.7, 148.3], [1669, 267, 1787, 280], [1614, 344, 1787, 338],
  [1327, 417, 1787, 367.5], [591.5, 447, 433, 279], [541.7, 592.5, 438, 555.5], [1479.3, 600.5, 1789, 434],
  [1489, 631.5, 1798.5, 465], [1479, 665, 1789, 498], [1479, 694, 1789, 526], [1479, 722, 1789, 555], [1479, 760, 1789, 593],
];
const lights = [
  [1975, 737], [1996.5, 733], [1972, 746], [1993, 741], [1986, 750], [1996, 755], [1975, 761], [1980.5, 767], [1990, 765], [1998, 774],
  [1978, 783], [1990.5, 786], [1997.5, 790], [1971, 796], [1977, 800], [1997, 797], [1978.5, 807], [1994, 806], [1974.5, 817],
  [1985, 818], [1990, 823], [1998, 824], [1972, 833], [1986.5, 839], [1997.5, 840], [1971, 841], [1978.5, 852], [1986, 854],
  [1990, 859], [1971.5, 871], [1754, 890], [1762.5, 896], [1780, 892.5], [1795, 893], [1805.5, 895.5], [1831.5, 892.5],
  [1852, 891.5], [1868.5, 894], [1880.5, 897], [1900, 891], [1908.5, 893], [1933, 891], [1997, 283], [1999, 263], [1995, 304],
  [1999, 319], [1993, 326], [1998, 332], [1994, 347], [1999, 342], [1996, 368], [1999, 390], [1309, 896], [1374, 895], [1420, 892],
  [1450, 896], [1497, 893], [1533, 896], [1560, 892], [1590, 895], [1622, 897], [1655, 892], [1688, 894], [1720, 893], [1737, 896],
];

/* ---------- drawings ---------- */
function BoardDrawing() {
  const pink = "#8d4f80";
  const text = { fontFamily: "DejaVu Sans Mono, monospace", fontSize: 8, fill: "#c274ab" };
  const t = (x, y, w, str, extra = {}) => (
    <text x={x} y={y} textLength={w} lengthAdjust="spacingAndGlyphs" {...text} {...extra}>{str}</text>
  );
  return (
    <svg width="1343" height="678" viewBox="431 169 1343 678">
      <defs>
        <pattern id="dots" x="443.8" y="181.2" width="31.6" height="31.02" patternUnits="userSpaceOnUse">
          <rect width="1.3" height="1.3" fill="#53606c" />
        </pattern>
      </defs>
      <rect x="431" y="169" width="1343" height="678" fill="#000f20" />
      <rect x="440" y="175" width="1334" height="672" fill="url(#dots)" />
      <g fill="none" stroke="#56646f">
        <rect x="633.5" y="181.5" width="938" height="651.5" />
        <path d="M671.500 169v40M640 176.500h65" />
      </g>
      <g fill="none" stroke={pink} strokeWidth="1.2">
        <rect x="665.7" y="212.2" width="873.9" height="589.5" />
        <rect x="672" y="219.3" width="860.7" height="575.9" />
        {[823, 981, 1138.5, 1296, 1453.5].map((x) => <path key={x} d={`M${x} 212v7M${x} 795v7`} />)}
        {[367.7, 523, 678].map((y) => <path key={y} d={`M665.700 ${y}h6.300M1532.700 ${y}h7`} />)}
        <path d="M1192.700 795V696.700h340M1192.700 744.500h340M1192.700 763.300h340M1192.700 775.300h340M1192.700 784.700h340M1255.700 775.300v9.400M1457.300 775.300v19.700" />
      </g>
      {["1", "2", "3", "4", "5", "6"].map((n, i) => (
        <g key={n}>
          {t(744 + i * 157.5, 218.8, 4.5, n)}
          {t(744 + i * 157.5, 801.5, 4.5, n)}
        </g>
      ))}
      {["A", "B", "C", "D"].map((n, i) => (
        <g key={n}>
          {t(666.5, 293 + i * 155.2, 4.5, n)}
          {t(1534, 293 + i * 155.2, 4.5, n)}
        </g>
      ))}
      {t(1196, 752, 21, "Sheet:")}
      {t(1196, 760.8, 75, "File: Demo.kicad_pcb")}
      {t(1197, 772, 22, "Title:", { fontWeight: 700, fontStyle: "italic", fontSize: 10.5 })}
      {t(1196, 783.2, 28, "Size: A4")}
      {t(1265.6, 783.2, 17, "Date:")}
      {t(1196, 792.3, 97, "KiCad E.D.A.  kicad (6.0.9)")}
      {t(1464, 783.2, 16, "Rev:", { fontWeight: 700, fontSize: 8.5 })}
      {t(1464, 792.3, 26, "Id: 1/1")}
    </svg>
  );
}

function Arrow({ p }) {
  const [x1, y1, x2, y2] = p;
  const len = Math.hypot(x2 - x1, y2 - y1);
  const ux = (x2 - x1) / len;
  const uy = (y2 - y1) / len;
  const bx = x2 - ux * 13;
  const by = y2 - uy * 13;
  return (
    <>
      <path d={`M${x1} ${y1}L${bx} ${by}`} stroke="#ff80ff" strokeWidth="1.9" />
      <path d={`M${x2} ${y2}L${bx - uy * 4.6} ${by + ux * 4.6}L${bx + uy * 4.6} ${by - ux * 4.6}Z`} fill="#ff80ff" />
    </>
  );
}

function Fibres() {
  return (
    <Backdrop width="750" height="900" viewBox="1250 0 750 900">
      <defs>
        <linearGradient id="strip" x1="0" y1="0" x2="0" y2="1">
          <stop offset="0" stopColor="#00132d" />
          <stop offset=".46" stopColor="#00173a" />
          <stop offset=".53" stopColor="#06385e" />
          <stop offset=".63" stopColor="#07506b" />
          <stop offset=".68" stopColor="#1c4e66" />
          <stop offset=".72" stopColor="#70463f" />
          <stop offset=".77" stopColor="#3b2b40" />
          <stop offset=".8" stopColor="#051534" />
          <stop offset=".87" stopColor="#062842" />
          <stop offset=".93" stopColor="#0a5368" />
          <stop offset="1" stopColor="#084f68" />
        </linearGradient>
        <linearGradient id="floor"><stop offset="0" stopColor="#00132d" /><stop offset="1" stopColor="#061c3a" /></linearGradient>
      </defs>
      <rect x="1970" width="30" height="900" fill="url(#strip)" />
      <rect x="1250" y="889" width="650" height="11" fill="url(#floor)" />
      <path d="M1890 889h110v11h-85z" fill="#084f68" />
      <g stroke="#02172f" strokeWidth="3" fill="none" opacity=".7">
        <path d="M1970 468l30 24M1970 498l30 24M1970 535l30 22M1970 560l30 24M1970 776l30 22M1970 832l30 22" />
      </g>
      <g fill="#5b8ba0" opacity=".6">
        {[[1980, 473], [1991, 495], [1980, 537], [1990, 563], [1975, 585], [1987, 617], [1974, 640], [1988, 676], [1978, 700]].map(([x, y]) => (
          <circle key={y} cx={x} cy={y} r="3" />
        ))}
      </g>
      {lights.map(([x, y]) => (
        <g key={`${x}-${y}`}>
          <circle cx={x} cy={y} r="2.9" fill="#2a8dbb" />
          <circle cx={x} cy={y} r="1.8" fill="#a4dcef" />
        </g>
      ))}
    </Backdrop>
  );
}

function IeeeMark() {
  return (
    <svg width="57" height="57" viewBox="0 0 57 57">
      <path d="M28.500 0Q40 18 57 28.500 40 39 28.500 56 18 39 0 28.500 18 18 28.500 0z" fill="#fff" />
      <path d="M25.500 9.500q3-2.500 6 0l15.500 16q2.500 3 0 6l-15.500 15.500q-3 2.500-6 0L10 31.500q-2.500-3 0-6z" fill="none" stroke="#00132d" strokeWidth="1.5" />
      <path d="M28.500 13l3.200 9h-1.800l.8 19h-4.400l.8-19h-1.800z" fill="#00132d" />
      <path d="M24 24.500c-9 1-8 5.500 3 6.500 14 .8 15-5.500 5.500-6.500" fill="none" stroke="#00132d" strokeWidth="2" />
      <circle cx="38" cy="52" r="1.6" fill="none" stroke="#9aa6b5" strokeWidth=".8" />
    </svg>
  );
}

function EtaMark() {
  const c = "#17365d";
  return (
    <svg width="229" height="123" viewBox="0 0 229 123">
      <path d="M114.500 0L229 61.500 114.500 123 0 61.500z" fill={c} />
      <path d="M114.500 10L210 61.500 114.500 113 19 61.500z" fill="#fff" />
      <path d="M105 19.500v4q0 7 9.500 7t9.500-7v-4l78 42-78 42v-4q0-7-9.500-7t-9.500 7v4l-78-42z" fill={c} />
      <ellipse cx="114.5" cy="61.5" rx="56" ry="22.5" fill="#fff" />
      <path d="M72 72c1-10 4-16 13-18 7-1 10-5 18-5 16-1 28 1 35 3 10 2 22 7 28 13-8-2-16-6-24-5-5 0-6 2-6 5 3 4 1 8-4 8l-2-2c3-1 3-4 0-5-1 3 0 5 2 7h-9l-3-8c-2 3-1 5 1 8h-8c-2-3-3-6-2-9l-12 0c0 4 1 6 3 9h-7c-3-3-4-5-4-8-3 1-5 2-3 6h-4c-1-3 1-6 1-8-6 0-7 4-10 9z" fill={c} />
      <path d="M86 58l6 4M97 54l-3 6M104 52l2 5M114 52l-1 6M123 54l4 5M133 53l-1 4M141 55l3 3M81 61l3 4" stroke="#8fa0b8" strokeWidth=".8" fill="none" />
    </svg>
  );
}

function Seal() {
  const c = "#173a62";
  const arc = { fontFamily: "Lato, sans-serif", fontWeight: 900, fontSize: 12, fill: c };
  const star = Array.from({ length: 10 }, (_, i) => {
    const r = i % 2 ? 4 : 11;
    const a = (Math.PI / 5) * i - Math.PI / 2;
    return `${76 + r * Math.cos(a)},${29 + r * Math.sin(a)}`;
  }).join(" ");
  const bookLines = Array.from({ length: 19 }, (_, i) => 48 + i * 2.9);
  return (
    <svg width="154" height="154" viewBox="0 0 152 152">
      <defs>
        <path id="ring" d="M33.500 119.500A58 58 0 1 1 118.500 119.500" />
        <path id="ribbonA" d="M45 97q8 3 14 12 11 10 34 7" />
      </defs>
      <circle cx="76" cy="76" r="74" fill="none" stroke={c} strokeWidth="3" strokeDasharray="2.9 1.1" />
      <circle cx="76" cy="76" r="68.5" fill="none" stroke={c} strokeWidth=".9" />
      <path d="M50 124A53 53 0 0 1 30 52Q45 23 76 22.500T122 52A53 53 0 0 1 102 124" fill="none" stroke={c} strokeWidth=".9" />
      <g stroke={c} strokeWidth=".8" fill="none">
        <path d="M64 32L42 40M66 35L48 46M62 28L50 28M88 32l22 8M86 35l18 11M90 28l12 0M66 38L55 46M86 38l10 8M38 52L26 62M40 62L24 78M40 74L24 90M40 86L28 100M112 52l14 10M112 62l14 14M114 54l10 6M128 84l-8-6M112 98l10 6M60 116v14M70 120v8M80 120v8M90 118v10M52 110v18M98 112v14M28 100l8 4M128 92l-8 0" />
      </g>
      <path d="M41 42h70v67H41z" fill="#fff" stroke={c} />
      <path d="M43 42v62M45 42v62M47 42v62M49 42v62M103 42v62M105 42v62M107 42v62M109 42v62" stroke={c} strokeWidth=".9" />
      <path d="M50 43q16-2 26 1 10-3 26-1v56q-16-2-26 3-10-5-26-3z" fill="#fff" stroke={c} strokeWidth=".9" />
      {bookLines.map((y, i) => (
        <path key={y} d={`M${i < 4 ? 62 : 52} ${y - 1}H73M79 ${y - 1}H100`} stroke={c} strokeWidth="1.2" strokeDasharray={`${3 + (i % 3)} 1 ${5 - (i % 2)} .8`} opacity=".8" />
      ))}
      <path d="M76 44v58" stroke={c} strokeWidth="4" strokeDasharray="1 1" />
      <rect x="53" y="47" width="7.5" height="8" fill="#fff" stroke={c} strokeWidth=".7" />
      <text x="54.3" y="54" fontFamily="Liberation Sans, sans-serif" fontSize="7.5" fill={c}>A</text>
      <polygon points={star} fill={c} />
      <path d="M76 20v9l8-3M76 29l5 8M76 29l-9-3M76 29l-5 8" stroke="#fff" strokeWidth=".7" fill="none" />
      <path d="M34 94q15-6 28 4 8 11 32 10l4 10q-32 6-43-7-8-8-19-4z" fill="#fff" stroke={c} />
      <path d="M82 95q18 0 34-3l3 9q-16 6-35 3-6-4-2-9z" fill="#fff" stroke={c} />
      <path d="M98 80q8-6 14 2t10-12q2 14-8 16t-4 8q-10 0-12-14zM110 68q4-3 6 2M100 74q8-6 8 6" fill="#fff" stroke={c} />
      <path d="M54 130l4-10q18 5 36 0l4 10-2 9q-20 5-40 0z" fill="#fff" stroke={c} />
      <path d="M54 128l-8 2 3-8-12 2M98 128l8 2-3-8 12 2" fill="none" stroke={c} strokeWidth=".8" />
      <text {...arc}><textPath href="#ring" textLength="258" lengthAdjust="spacing">THE · UNIVERSITY · OF · CALIFORNIA</textPath></text>
      <text {...arc} fontSize="7"><textPath href="#ribbonA" textLength="53" startOffset="0">LET THERE BE</textPath></text>
      <text x="92" y="102" textLength="22" {...arc} fontSize="7" transform="rotate(-3 92 102)">LIGHT</text>
      <text x="56" y="136" textLength="41" lengthAdjust="spacingAndGlyphs" {...arc} fontSize="13">IRVINE</text>
      <circle cx="39" cy="124" r="1.6" fill={c} />
      <circle cx="113" cy="124" r="1.6" fill={c} />
    </svg>
  );
}

/* ---------- page ---------- */
const renderTools = (list) =>
  list.map((name, i) =>
    name === "|" ? <HSep key={i} /> : (
      <ToolCell key={i} $on={name.endsWith("*")}><Icon name={name.replace("*", "")} size={19} /></ToolCell>
    )
  );

export default function App() {
  return (
    <>
      <Global />
      <Slide>
        <Stage>
          <Fibres />
          <Side>
            <Brand>
              <IeeeMark />
              <BrandText>
                <BrandName><Fit w={143}>IEEE</Fit></BrandName>
                <BrandSub><Fit w={140}>Student Branch at UC Irvine</Fit></BrandSub>
              </BrandText>
            </Brand>
            <Title>
              <Fit w={150}>The</Fit>
              <Fit w={167}>PCB</Fit>
              <Fit w={255}>Editor</Fit>
            </Title>
          </Side>
          <Window>
            <TitleBar>
              <Icon name="app" size={12} />
              <Fit w={87}>Demo — PCB Editor</Fit>
              <WindowButtons>
                <svg width="10" height="10"><path d="M1 4.500h8" stroke="#888" /></svg>
                <svg width="10" height="10" fill="none" stroke="#888"><path d="M1.500 2.500h6v6h-6zM3.500 2V.5h5v5.500H8" /></svg>
                <svg width="10" height="10"><path d="M1 0l8 8M9 0L1 8" stroke="#888" /></svg>
              </WindowButtons>
            </TitleBar>
            <MenuBar>{menus.map(([m, w]) => <Fit key={m} w={w}>{m}</Fit>)}</MenuBar>
            <ToolRow>
              {topTools.map((name, i) => name === "|" ? <Sep key={i} /> : <Slot key={i}><Icon name={name} /></Slot>)}
              <Select $w={112} $h={18}>
                <LayerChip />
                <Fit w={52}>F.Cu (PgUp)</Fit>
                <Chevron />
              </Select>
              <Slot><Icon name="pair" /></Slot>
              <Sep />
              <Slot><Icon name="schematic" /></Slot>
              <Sep />
              <Slot><Icon name="console" /></Slot>
            </ToolRow>
            <OptionRow>
              <Select $w={128}><Fit w={105}>Track: use netclass width</Fit><Chevron /></Select>
              <TrackButton>
                <svg width="20" height="20" viewBox="0 0 20 20">
                  <path d="M1.500 1v12q0 4 5 4h7q5 0 5-4V1" {...s("#444", 1.5)} />
                  <path d="M6 6.500h8M6 10h8" {...s("#444", 1.2)} />
                  <circle cx="10" cy="17" r="2.2" fill={B} />
                </svg>
              </TrackButton>
              <Sep $m={2} />
              <Select $w={122}><Fit w={92}>Via: use netclass sizes</Fit><Chevron /></Select>
              <Sep $m={4} />
              <Select $w={164}><Fit w={117}>Grid: 0.0100 mm (0.39 mils)</Fit><Chevron /></Select>
              <Sep $m={4} />
              <Select $w={78}><Fit w={50}>Zoom Auto</Fit><Chevron /></Select>
            </OptionRow>
            <Body>
              <ToolColumn $w={30}>{renderTools(leftTools)}</ToolColumn>
              <CanvasColumn>
                <BoardDrawing />
                <VScroll><i /></VScroll>
                <HScroll><i /></HScroll>
              </CanvasColumn>
              <ToolColumn $w={31} $pl={2}>{renderTools(rightTools)}</ToolColumn>
              <Panel>
                <PanelHead><Fit w={46}>Appearance</Fit></PanelHead>
                <Tabs>
                  <Tab $on $pr={7}><Fit w={27}>Layers</Fit></Tab>
                  <Tab><Fit w={32}>Objects</Fit></Tab>
                  <Tab $pr={12}><Fit w={20}>Nets</Fit></Tab>
                </Tabs>
                <Layers>
                  {layers.map(([name, color, w], i) => (
                    <LayerRow key={name} $on={i === 0}>
                      <Marker $on={i === 0} />
                      <Swatch $c={color} />
                      <Eye width="14" height="14" viewBox="0 0 14 14">
                        <circle cx="7" cy="7" r="6.8" fill="#555" />
                        <path d="M1.500 7Q7 .8 12.500 7 7 13.200 1.500 7z" fill="#f2f2f2" />
                        <circle cx="7" cy="7" r="2.1" fill="#ccc" stroke="#555" />
                      </Eye>
                      <Fit w={w}>{name}</Fit>
                    </LayerRow>
                  ))}
                </Layers>
                <DisplayOptions>
                  <svg width="4" height="6"><path d="M0 0l3.500 3L0 6z" fill="#555" /></svg>
                  <Fit w={91}>Layer Display Options</Fit>
                </DisplayOptions>
                <Presets>
                  <Fit w={75}>Presets (Ctrl+Tab):</Fit>
                  <Select $w={136} $h={18}><Fit w={41}>All Layers</Fit><Chevron /></Select>
                </Presets>
                <PanelHead><Fit w={63}>Selection Filter</Fit></PanelHead>
                <FilterGrid>
                  {filters.map(([name, w]) => (
                    <Check key={name}>
                      <CheckBox>
                        <svg width="7" height="6" viewBox="0 0 7 6"><path d="M1 3l1.800 1.800L6 1.500" fill="none" stroke="#cfe4f7" /></svg>
                      </CheckBox>
                      <Fit w={w}>{name}</Fit>
                    </Check>
                  ))}
                </FilterGrid>
              </Panel>
            </Body>
            <StatusBar>
              {statuses.map(([name, w, slot]) => (
                <Status key={name} $slot={slot}><Fit w={w}>{name}</Fit>0</Status>
              ))}
            </StatusBar>
          </Window>
          <Overlay>
            <Frame $x={1364} $y={98} $w={326} $h={65} $b={2} $c="#595959" $bg="#efefef" />
            <Frame $x={1232} $y={522} $w={272.5} $h={284} $b={8} $r={3} $c="#000" />
            <SelectLayer $x={1769} $y={100} $w={223} $h={80} $b={6} $r={3} $c="#fe0000"><Fit w={174}>Select Layer</Fit></SelectLayer>
            {labels.map(([x, y, lines]) => (
              <Label key={`${x}-${y}`} $x={x} $y={y}>
                {lines.map(([line, w]) => <Fit key={line} w={w}>{line}</Fit>)}
              </Label>
            ))}
            <Label $right $x={1252.5} $y={571}>
              {drawLabels.map(([line, w]) => <Fit key={line} w={w}>{line}</Fit>)}
            </Label>
            <Arrows width="2000" height="899">{arrows.map((p) => <Arrow key={p.join()} p={p} />)}</Arrows>
          </Overlay>
        </Stage>
        <Footer>
          <FooterRule />
          <Chapter>
            <EtaMark />
            <ChapterText>
              <ChapterLine $rule><Fit w={509}>IEEE-Eta Kappa Nu, Zeta Omega</Fit></ChapterLine>
              <ChapterLine><Fit w={473}>University of California, Irvine</Fit></ChapterLine>
            </ChapterText>
          </Chapter>
          <SealBox><Seal /></SealBox>
        </Footer>
      </Slide>
    </>
  );
}
